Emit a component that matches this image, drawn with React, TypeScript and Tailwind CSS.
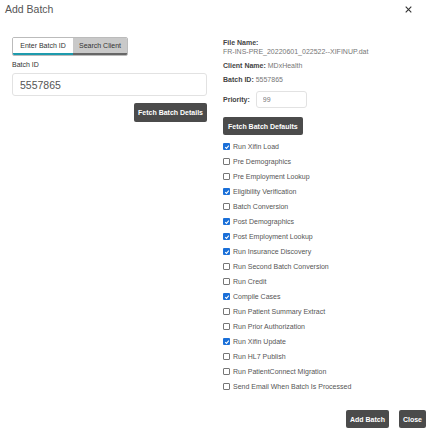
import { useState } from 'react'

type Step = {
  label: string
  checked: boolean
}

const steps: Step[] = [
  { label: 'Run Xifin Load', checked: true },
  { label: 'Pre Demographics', checked: false },
  { label: 'Pre Employment Lookup', checked: false },
  { label: 'Eligibility Verification', checked: true },
  { label: 'Batch Conversion', checked: false },
  { label: 'Post Demographics', checked: true },
  { label: 'Post Employment Lookup', checked: true },
  { label: 'Run Insurance Discovery', checked: true },
  { label: 'Run Second Batch Conversion', checked: false },
  { label: 'Run Credit', checked: false },
  { label: 'Compile Cases', checked: true },
  { label: 'Run Patient Summary Extract', checked: false },
  { label: 'Run Prior Authorization', checked: false },
  { label: 'Run Xifin Update', checked: true },
  { label: 'Run HL7 Publish', checked: false },
  { label: 'Run PatientConnect Migration', checked: false },
  { label: 'Send Email When Batch Is Processed', checked: false },
]

function Check({ on }: { on: boolean }) {
  if (on) {
    return (
      <span className="flex h-[7px] w-[7px] items-center justify-center rounded-[1px] bg-[#1a6fd8]">
        <svg viewBox="0 0 10 10" className="h-[6px] w-[6px]">
          <path d="M2 5.2 L4.2 7.3 L8 2.8" fill="none" stroke="white" strokeWidth="1.8" />
        </svg>
      </span>
    )
  }
  return <span className="h-[7px] w-[7px] rounded-[1px] border border-[#767676] bg-white" />
}

export default function App() {
  const [tab, setTab] = useState<'batch' | 'client'>('batch')
  const [checks, setChecks] = useState(steps)

  return (
    <div className="h-[435px] w-[429px] bg-white font-['Liberation_Sans',Arial,sans-serif] text-[#333]">
      {/* header */}
      <div className="flex h-[18px] items-center justify-between pl-[5px] pr-[17px] pt-[1px]">
        <h1 className="text-[10.5px] text-[#555]">Add Batch</h1>
        <svg viewBox="0 0 10 10" className="h-[7px] w-[7px]">
          <path d="M1 1 L9 9 M9 1 L1 9" stroke="#333" strokeWidth="1.6" />
        </svg>
      </div>

      <div className="flex gap-[16px] pl-[12px] pt-[18px] leading-[9px]">
        {/* left column */}
        <div className="flex w-[195px] flex-col pt-[1px]">
          <div className="flex h-[19px] w-[116px] overflow-hidden rounded-[2px] border border-[#bbb] text-[7px]">
            <button
              onClick={() => setTab('batch')}
              className={`flex w-[60px] items-center justify-center border-b-2 border-[#1d9bad] text-[#333] ${
                tab === 'batch' ? 'bg-white' : 'bg-[#c9c9c9]'
              }`}
            >
              Enter Batch ID
            </button>
            <button
              onClick={() => setTab('client')}
              className={`flex flex-1 items-center justify-center border-b-2 border-[#666] text-[#333] ${
                tab === 'client' ? 'bg-white' : 'bg-[#c9c9c9]'
              }`}
            >
              Search Client
            </button>
          </div>
          <label className="mt-[3.5px] text-[7px] text-[#333]">Batch ID</label>
          <input
            defaultValue="5557865"
            className="mt-[4.5px] h-[23px] w-[195px] rounded-[3px] border border-[#e2e2e2] px-[7px] text-[10.5px] text-[#555] outline-none"
          />
          <div className="mt-[7px] flex justify-end">
            <button className="h-[19px] rounded-[2px] bg-[#4b4b4b] px-[4px] text-[7px] font-bold text-white">
              Fetch Batch Details
            </button>
          </div>
        </div>

        {/* right column */}
        <div className="flex flex-1 flex-col text-[7px] text-[#777]">
          <div className="mt-[2px] font-bold text-[#444]">File Name:</div>
          <div>FR-INS-PRE_20220601_022522--XIFINUP.dat</div>
          <div className="mt-[5px]">
            <span className="font-bold text-[#444]">Client Name:</span> MDxHealth
          </div>
          <div className="mt-[5px]">
            <span className="font-bold text-[#444]">Batch ID:</span> 5557865
          </div>
          <div className="mt-[7px] flex items-center gap-[6px]">
            <span className="font-bold text-[#444]">Priority:</span>
            <input
              defaultValue="99"
              className="h-[17px] w-[51px] rounded-[3px] border border-[#e2e2e2] px-[6px] text-[7px] text-[#777] outline-none"
            />
          </div>
          <div className="mt-[9px]">
            <button className="h-[18px] rounded-[2px] bg-[#4b4b4b] px-[5px] text-[7px] font-bold text-white">
              Fetch Batch Defaults
            </button>
          </div>
          <ul className="mt-[4px] flex flex-col">
            {checks.map((s, i) => (
              <li
                key={s.label}
                onClick={() =>
                  setChecks(prev => prev.map((c, j) => (j === i ? { ...c, checked: !c.checked } : c)))
                }
                className="flex h-[15px] cursor-pointer items-center gap-[3px] text-[#555]"
              >
                <Check on={s.checked} />
                <span>{s.label}</span>
              </li>
            ))}
          </ul>
          <div className="mt-[16px] flex justify-end gap-[10px] pr-[3px]">
            <button className="h-[18px] rounded-[2px] bg-[#4b4b4b] px-[4px] text-[7px] font-bold text-white">
              Add Batch
            </button>
            <button className="h-[18px] rounded-[2px] bg-[#4b4b4b] px-[4px] text-[7px] font-bold text-white">
              Close
            </button>
          </div>
        </div>
      </div>
    </div>
  )
}
